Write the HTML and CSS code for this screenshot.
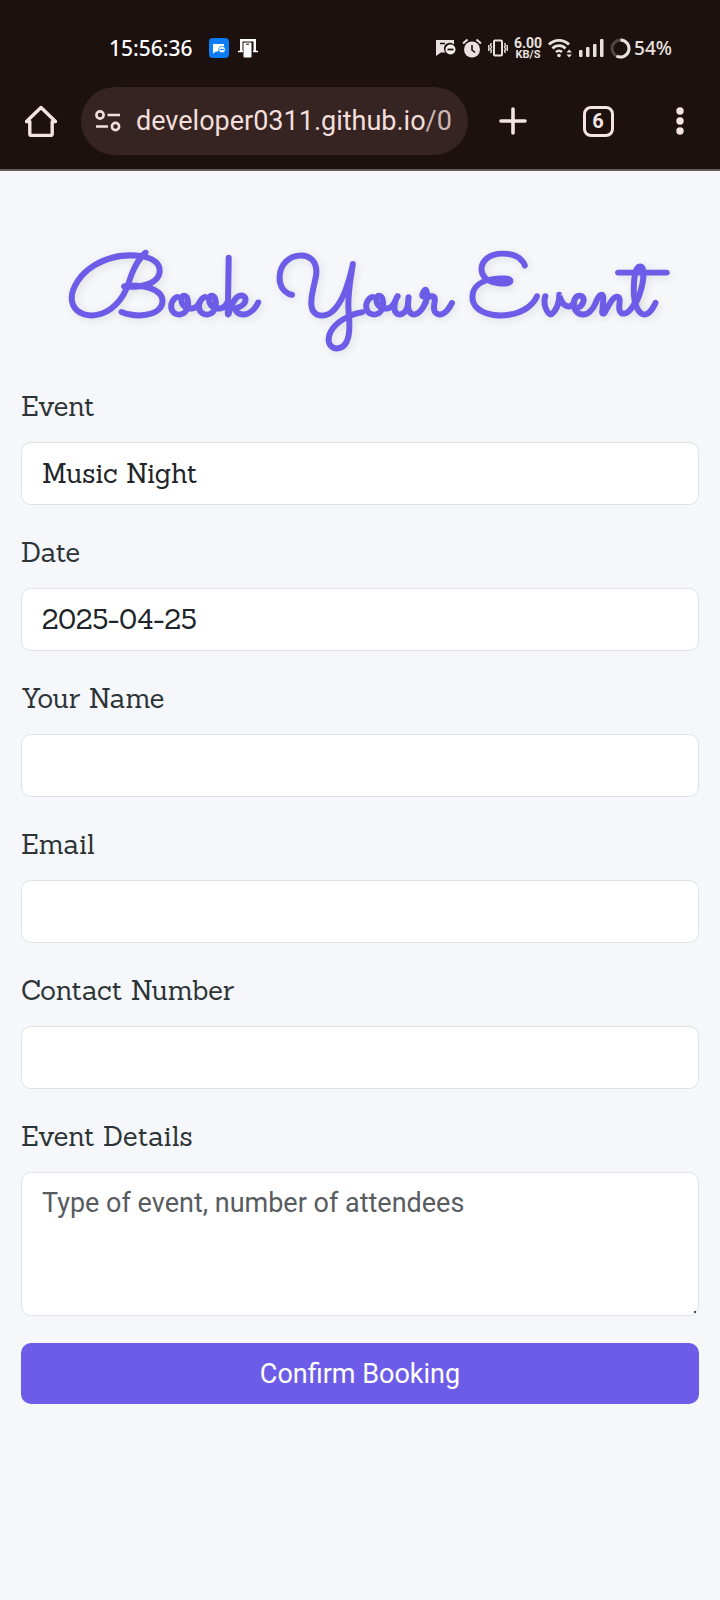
FILE: index.html
```html
<!DOCTYPE html>
<html lang="en">
<head>
<meta charset="utf-8">
<meta name="viewport" content="width=device-width, initial-scale=1">
<title>Book Your Event</title>
<link rel="stylesheet" href="styles.css">
</head>
<body>
<header class="chrome">
  <div class="status">
    <span class="clock">15:56:36</span>
    <svg class="app-badge" width="20" height="20" viewBox="0 0 20 20"><rect width="20" height="20" rx="4" fill="#0a7cf5"/><path d="M4 6h11v2.500a4 4 0 0 0-5.500 5H7l-3 2z" fill="#fff"/><circle cx="13" cy="11.500" r="3.200" fill="#fff" stroke="#0a7cf5" stroke-width=".6"/><path d="M11.200 11.500h3.600" stroke="#0a7cf5" stroke-width="1.200"/></svg>
    <svg width="20" height="20" viewBox="0 0 20 20"><path d="M2 1h16v12h-2.500V3.500h-11V13H2z" fill="#fff"/><path d="M0 13.500h5M15 13.500h5" stroke="#fff" stroke-width="1.600"/><rect x="5.500" y="4.500" width="8" height="15" rx="1" fill="#fff"/><path d="M8 6.200h3" stroke="#1c110f"/></svg>
    <div class="indicators">
      <svg width="20" height="20" viewBox="0 0 20 20"><path d="M0 2h18v4.500a5.500 5.500 0 0 0-8.500 8H5l-5 3.500z" fill="#e9e1df"/><path d="M4 5.500h5" stroke="#1c110f" stroke-width="1.500"/><circle cx="14.500" cy="11.500" r="5" fill="#f5efed"/><path d="M11.500 11.500h6" stroke="#1c110f" stroke-width="1.800"/></svg>
      <svg width="20" height="20" viewBox="0 0 20 20" fill="none"><circle cx="10" cy="11.500" r="8" fill="#e9e1df"/><path d="M1 5.500l4.500-4M19 5.500l-4.500-4" stroke="#e9e1df" stroke-width="2"/><path d="M10 7v5l3 2.500" stroke="#1c110f" stroke-width="1.600"/></svg>
      <svg width="20" height="20" viewBox="0 0 20 20" fill="none" stroke="#e9e1df"><rect x="6" y="2.500" width="8" height="15" rx="1" stroke-width="2"/><path d="M3.500 5l-1 2 1 2-1 2 1 2-1 2M.8 7v6M16.500 5l1 2-1 2 1 2-1 2 1 2M19.200 7v6" stroke-width="1.400"/></svg>
      <span class="speed"><span>6.00</span><span class="unit">KB/S</span></span>
      <svg width="25" height="20" viewBox="0 0 25 20" fill="none" stroke="#e9e1df" stroke-width="2.800"><path d="M1 6.500a14 14 0 0 1 20 0M4.500 10.500a9 9 0 0 1 13 0M8 14a4.500 4.500 0 0 1 6 0"/><circle cx="11" cy="17.500" r="1.800" fill="#e9e1df" stroke="none"/><path d="M18.500 14.500l2.700-3 2.700 3zM18.500 16.500l2.700 3 2.700-3z" fill="#e9e1df" stroke="none"/></svg>
      <svg width="25" height="20" viewBox="0 0 25 20" fill="#e9e1df"><rect y="12" width="3.500" height="7" rx="1"/><rect x="7" y="9" width="3.500" height="10" rx="1"/><rect x="14" y="6" width="3.500" height="13" rx="1"/><rect x="21" y="1" width="3.500" height="18" rx="1"/></svg>
      <span class="battery"><svg width="21" height="21" viewBox="0 0 21 21" fill="none" stroke-width="3"><circle cx="10.500" cy="10.500" r="8.500" stroke="#514644"/><path d="M10.500 2a8.500 8.500 0 1 1-4 16" stroke="#e9e1df"/></svg>54%</span>
    </div>
  </div>
  <nav class="toolbar" aria-label="Browser">
    <button class="home" type="button" aria-label="Home"><svg width="32" height="32" viewBox="0 0 32 32" fill="none" stroke="#f3e4e1" stroke-width="3.400" stroke-linejoin="round"><path d="M1.500 16.500h3.300V29a1.500 1.500 0 0 0 1.500 1.500h19.400a1.500 1.500 0 0 0 1.500-1.500V16.500h3.300L16 2.500z"/></svg></button>
    <div class="address">
      <svg width="26" height="22" viewBox="0 0 26 22" fill="none" stroke="#f3dedb" stroke-width="2.600"><circle cx="5" cy="5" r="3.600"/><path d="M12.500 5H25M1 16.500h12"/><circle cx="20.500" cy="16.500" r="3.600"/></svg>
      <span class="url">developer0311.github.io<span class="path">/0</span></span>
    </div>
    <button class="action new-tab" type="button" aria-label="New tab"><svg width="28" height="28" viewBox="0 0 28 28" stroke="#f3e4e1" stroke-width="3.600" stroke-linecap="round"><path d="M14 2v24M2 14h24"/></svg></button>
    <button class="action" type="button" aria-label="Tabs"><span class="tabs">6</span></button>
    <button class="action menu" type="button" aria-label="Menu"><svg width="8" height="28" viewBox="0 0 8 28" fill="#f3e4e1"><circle cx="4" cy="4" r="3.700"/><circle cx="4" cy="14" r="3.700"/><circle cx="4" cy="24" r="3.700"/></svg></button>
  </nav>
</header>
<main class="page">
  <h1 class="title">Book Your Event</h1>
  <form class="booking">
    <div class="field"><label for="event">Event</label><input class="control" id="event" type="text" value="Music Night" readonly></div>
    <div class="field"><label for="date">Date</label><input class="control" id="date" type="text" value="2025-04-25" readonly></div>
    <div class="field"><label for="name">Your Name</label><input class="control" id="name" type="text"></div>
    <div class="field"><label for="email">Email</label><input class="control" id="email" type="email"></div>
    <div class="field"><label for="phone">Contact Number</label><input class="control" id="phone" type="tel"></div>
    <div class="field details"><label for="details">Event Details</label><div class="area-wrap"><textarea class="control area" id="details" rows="3" placeholder="Type of event, number of attendees"></textarea></div></div>
    <button class="submit" type="submit">Confirm Booking</button>
  </form>
</main>
</body>
</html>
```
FILE: styles.css
```css
* { box-sizing: border-box; }
body {
  margin: 0;
  min-height: 100vh;
  background: #f5f7fb;
  font-family: Roboto, sans-serif;
}
svg { display: block; flex: none; }
button { border: 0; padding: 0; background: none; font: inherit; cursor: pointer; }

.chrome { background: #1c110f; border-bottom: 2px solid #655b5a; color: #f3e4e1; }
.status {
  display: flex;
  align-items: center;
  padding: 34px 48px 0 109px;
  height: 62px;
  gap: 9px;
  font-family: "Noto Sans", sans-serif;
  font-size: 21px;
  font-weight: 500;
  color: #fff;
}
.app-badge { margin-left: 7px; }
.indicators { display: flex; align-items: center; gap: 6px; margin-left: auto; color: #e9e1df; }
.speed { display: flex; flex-direction: column; align-items: center; font-family: Roboto, sans-serif; font-size: 14px; font-weight: 700; line-height: 12px; }
.unit { font-size: 11px; line-height: 11px; }
.battery { display: flex; align-items: center; gap: 3px; font-size: 19px; }

.toolbar { display: flex; align-items: center; padding: 25px 0 14px 25px; }
.home { flex: none; margin-right: 24px; }
.address {
  display: flex;
  align-items: center;
  gap: 15px;
  flex: 1;
  min-width: 0;
  height: 68px;
  margin-right: 2px;
  padding: 0 14px;
  border-radius: 34px;
  background: #362422;
}
.url { overflow: hidden; white-space: nowrap; font-size: 27px; line-height: 36px; color: #f3dedb; }
.path { color: #cdb8b5; }
.action { flex: none; display: flex; justify-content: center; align-items: center; width: 84px; height: 48px; }
.new-tab { width: 86px; }
.menu { width: 80px; }
.tabs {
  width: 31px;
  height: 31px;
  border: 3px solid #f3e4e1;
  border-radius: 8px;
  font-size: 20px;
  font-weight: 700;
  line-height: 25px;
  color: #f3e4e1;
}

.page { padding: 73px 21px 48px; }
.title {
  margin: 0 0 37px;
  font-family: Sacramento, "Liberation Serif", cursive;
  font-size: 88px;
  font-weight: 700;
  line-height: 108px;
  text-align: center;
  color: #6c5ce7;
  text-shadow: 2px 2px 8px rgba(0, 0, 0, 0.1);
}
.booking { display: flex; flex-direction: column; }
.field { display: flex; flex-direction: column; gap: 18px; margin-bottom: 30px; }
.details { margin-bottom: 27px; }
label { font-family: Sanchez, "DejaVu Serif", serif; font-size: 27px; line-height: 35px; color: #2d3436; }
.control {
  width: 100%;
  height: 63px;
  margin: 0;
  padding: 0 20px 1px;
  border: 1px solid #dee2e6;
  border-radius: 10px;
  background: #fff;
  font-family: Sanchez, "DejaVu Serif", serif;
  font-size: 27px;
  color: #212529;
}
.area-wrap { position: relative; }
.area-wrap::after {
  content: "";
  position: absolute;
  right: 3px;
  bottom: 3px;
  width: 2px;
  height: 2px;
  background: #4a4d50;
}
.area { display: block; height: 144px; padding: 10px 20px; font-family: Roboto, sans-serif; font-size: 27px; line-height: 40px; resize: none; }
.area::placeholder { color: #595c5f; opacity: 1; }
.submit { height: 61px; border-radius: 10px; background: #6c5ce7; color: #fff; font-size: 27px; }
```
